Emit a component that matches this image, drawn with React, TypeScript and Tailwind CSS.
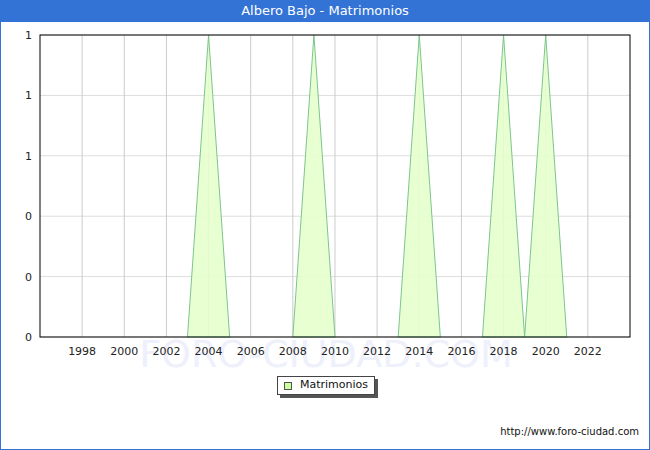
import React from "react";

const X0 = 39; // page x 40 minus border
const PX = 21.07; // px per year
const yearX = (y: number) => X0 + (y - 1996) * PX;
const TOP = 13;
const BOT = 315;
const peaks = [2004, 2009, 2014, 2018, 2020];
const yLabels = ["1", "1", "1", "0", "0", "0"];

export default function App() {
  const years: number[] = [];
  for (let y = 1998; y <= 2022; y += 2) years.push(y);
  return (
    <div className="w-[650px] h-[450px] flex flex-col border border-t-0 border-[#3473d6] bg-white" style={{ fontFamily: "'DejaVu Sans', sans-serif" }}>
      <div className="h-[22px] bg-[#3473d6] text-white text-[13px] flex items-center justify-center shrink-0">
        Albero Bajo - Matrimonios
      </div>
      <svg width="648" height="350" className="shrink-0">
        <text x="325" y="345" textAnchor="middle" fontSize="38" fill="#eef0fb" fontFamily="DejaVu Sans">FORO-CIUDAD.COM</text>
        {[0, 1, 2, 3, 4, 5].map((i) => {
          const y = TOP + (i * (BOT - TOP)) / 5;
          return (
            <g key={i}>
              <line x1={X0} x2={629} y1={y} y2={y} stroke="#dddddd" />
              <text x={31} y={y + 4} textAnchor="end" fontSize="11" fill="#222">{yLabels[i]}</text>
            </g>
          );
        })}
        {years.map((y) => (
          <g key={y}>
            <line x1={yearX(y)} x2={yearX(y)} y1={TOP} y2={BOT} stroke="#cccccc" />
            <text x={yearX(y)} y={333} textAnchor="middle" fontSize="11" fill="#222">{y}</text>
          </g>
        ))}
        {peaks.map((p) => (
          <polygon
            key={p}
            points={`${yearX(p - 1)},${BOT} ${yearX(p)},${TOP} ${yearX(p + 1)},${BOT}`}
            fill="#e6ffcc"
            fillOpacity="0.9"
            stroke="#7cc58f"
            strokeWidth="1"
          />
        ))}
        <rect x={X0} y={TOP} width={629 - X0} height={BOT - TOP} fill="none" stroke="#000" strokeWidth="1" />
      </svg>
      <div className="flex justify-center mt-[4px] pl-[2px]">
        <div className="relative">
          <div className="absolute left-[3px] top-[3px] w-full h-full bg-[#555]" />
          <div className="relative flex items-center gap-[8px] border border-[#444] bg-white px-[6px] h-[19px] text-[11px] text-[#111]">
            <span className="w-[8px] h-[8px] border border-[#555] bg-[#ccff99]" />
            Matrimonios
          </div>
        </div>
      </div>
      <div className="mt-auto mb-[10px] pr-[10px] text-right text-[10px] text-[#111]">http://www.foro-ciudad.com</div>
    </div>
  );
}
